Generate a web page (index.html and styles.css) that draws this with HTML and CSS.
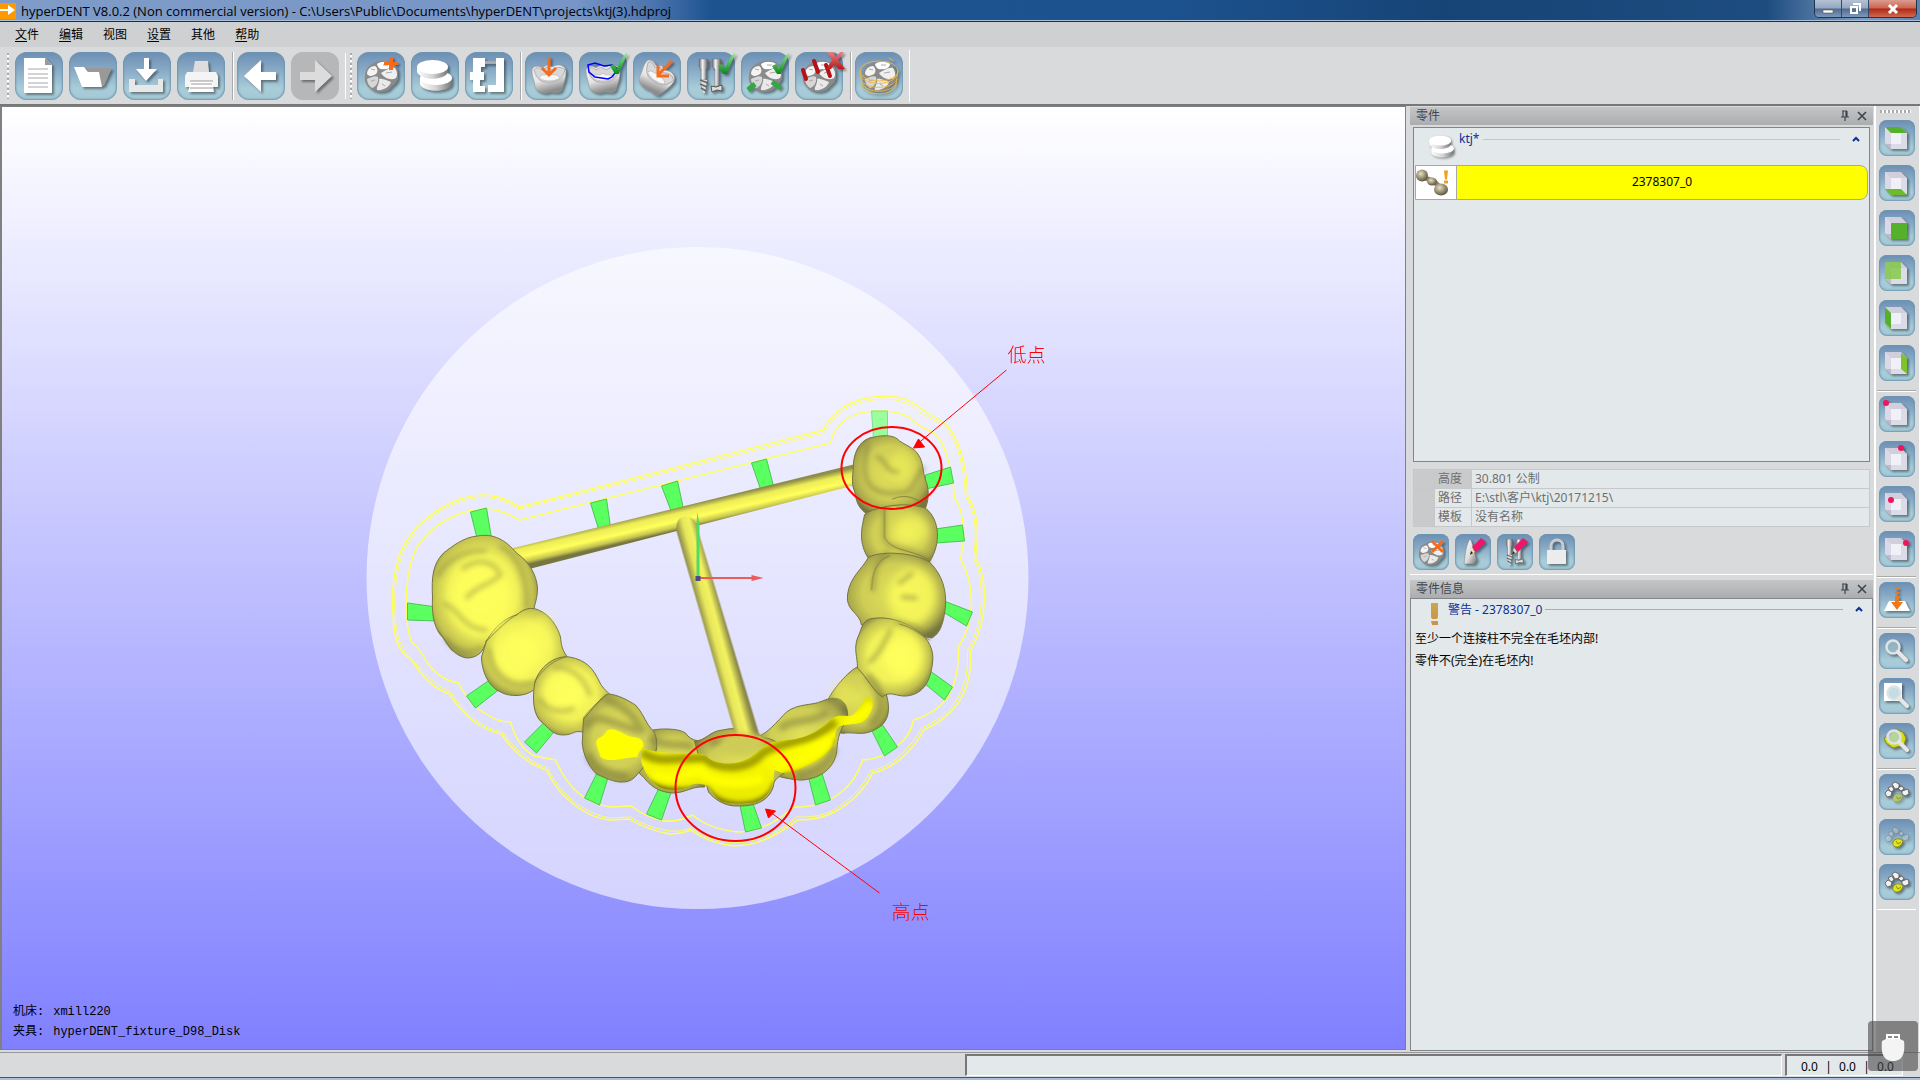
FILE: index.html
```html
<!DOCTYPE html>
<html lang="zh-CN">
<head>
<meta charset="UTF-8">
<meta name="viewport" content="width=device-width, initial-scale=1.0">
<title>hyperDENT V8.0.2</title>
<link rel="stylesheet" href="styles.css">
</head>
<body>

<!-- Shared icon parts -->
<svg class="defs" aria-hidden="true">
    <defs>
        <linearGradient id="enamel" x1="0" y1="0" x2="1" y2="1">
            <stop offset="0" stop-color="#fff"/><stop offset="0.55" stop-color="#dcdcdc"/><stop offset="1" stop-color="#6e6e6e"/>
        </linearGradient>
        <linearGradient id="enamelDown" x1="0" y1="0" x2="0.3" y2="1">
            <stop offset="0" stop-color="#f2f2f2"/><stop offset="0.6" stop-color="#e6e6e6"/><stop offset="1" stop-color="#8c8c8c"/>
        </linearGradient>
        <linearGradient id="steel" x1="0" y1="0" x2="1" y2="0">
            <stop offset="0" stop-color="#666"/><stop offset="0.4" stop-color="#f4f4f4"/><stop offset="1" stop-color="#555"/>
        </linearGradient>
        <linearGradient id="puck" x1="0" y1="0" x2="1" y2="0">
            <stop offset="0" stop-color="#fff"/><stop offset="0.5" stop-color="#d4d4d4"/><stop offset="1" stop-color="#777"/>
        </linearGradient>
        <linearGradient id="tick" x1="0" y1="0" x2="0" y2="1">
            <stop offset="0" stop-color="#8df08d"/><stop offset="1" stop-color="#0a8a1a"/>
        </linearGradient>
        <linearGradient id="cross" x1="0" y1="0" x2="0" y2="1">
            <stop offset="0" stop-color="#e88080"/><stop offset="1" stop-color="#c01818"/>
        </linearGradient>
        <linearGradient id="warn" x1="0" y1="0" x2="0" y2="1">
            <stop offset="0" stop-color="#c8a850"/><stop offset="1" stop-color="#cf8f45"/>
        </linearGradient>
    </defs>
    <symbol id="i-molar" viewBox="0 0 48 48">
        <path d="M8 24C8 17 12 13 17 11C22 8 29 8 33 10C39 12 42 17 41 24C42 30 36 33 33 37C28 41 19 41 14 37C9 33 7 29 8 24Z" fill="#8a8a8a"/>
        <path d="M10 22C10 17 14 14 18 14C21 16 21 20 19 22C16 24 12 25 10 22Z" fill="#f4f4f4"/>
        <path d="M20 12C24 9 31 9 35 12C35 15 31 18 27 17C23 18 21 16 20 12Z" fill="#fff"/>
        <path d="M24 21C28 19 33 15 38 16C40 19 41 23 39 26C34 29 27 26 24 21Z" fill="#efefef"/>
        <path d="M10 27C14 25 19 23 21 25C22 30 19 35 15 36C12 34 10 31 10 27Z" fill="#d6d6d6"/>
        <path d="M22 27C25 26 31 29 34 30C33 34 27 39 20 38C19 35 23 31 22 27Z" fill="#e9e9e9"/>
        <path d="M14 17L18 18M26 13L31 13M29 21L35 20M14 29L18 28M25 32L28 34" stroke="#aaa" fill="none"/>
    </symbol>
    <symbol id="i-crown" viewBox="0 0 48 48">
        <path d="M7 19C7 14 13 13 17 16L22 13L27 15C33 11 40 13 41 19C41 27 39 31 37 37C36 42 30 40 25 40C19 43 11 39 10 35C10 29 7 26 7 19Z" fill="url(#enamelDown)" stroke="#999" stroke-width=".6"/>
        <path d="M9 18C12 28 17 31 24 30C32 31 38 26 40 18C36 14 31 15 27 18L22 15L17 18C14 15 10 15 9 18Z" fill="#d8d8d8" stroke="#b0b0b0"/>
        <path d="M14 26C17 20 20 25 24 21C28 25 31 20 35 26C30 30 18 30 14 26Z" fill="#f6f6f6" stroke="#c4c4c4"/>
    </symbol>
    <symbol id="i-tick" viewBox="0 0 48 48">
        <path d="M31 14L35 12L38 17C41 9 44 4 49 0C46 7 42 15 40 22L36 22Z" fill="url(#tick)"/>
    </symbol>
    <symbol id="i-screws" viewBox="0 0 48 48">
        <path d="M12 7H21V15L19 17V28H14V17L12 15Z" fill="url(#steel)" stroke="#777" stroke-width=".5"/>
        <path d="M25 7H34V15L32 17V34H28V17L25 15Z" fill="url(#steel)" stroke="#777" stroke-width=".5"/>
        <path d="M24 34L29 35L35 33V39L30 38L25 40Z" fill="#ddd" stroke="#555"/>
        <path d="M14 28H20L18 41H16Z" fill="#ddd"/>
        <path d="M13 28L21 31M13 32L20 35M14 36L19 39" stroke="#666" stroke-width="1.5"/>
    </symbol>
    <symbol id="i-pucks" viewBox="0 0 48 48">
        <path d="M9 27V32C11 41 39 41 41 32V25Z" fill="url(#puck)"/>
        <ellipse cx="25" cy="26" rx="16" ry="7" fill="#fff"/>
        <path d="M6 15V20C9 29 34 29 37 20V15Z" fill="url(#puck)"/>
        <ellipse cx="21.500" cy="15" rx="15.500" ry="7" fill="#fff"/>
    </symbol>
    <symbol id="i-cube" viewBox="0 0 36 36">
        <path d="M6 7H22L28 13V29H12L6 23Z" fill="#d2cfdd"/>
        <path d="M6 7L12 13V29L6 23Z" fill="#ddd8e8"/>
        <path d="M6 23L12 29H28L22 24H6Z" fill="#c0b8cc"/>
        <path d="M12 13H28V29H12Z" fill="#dcdce8"/>
        <path d="M12 13H22V24H12Z" fill="#f0f0f7"/>
    </symbol>
    <symbol id="i-lens" viewBox="0 0 36 36">
        <circle cx="14" cy="14" r="6.500" fill="#a9cfd8" fill-opacity=".7" stroke="#dfe3e6" stroke-width="2.500"/>
        <path d="M19 19L27 27" stroke="#e6e6e6" stroke-width="4" stroke-linecap="round"/>
    </symbol>
    <symbol id="i-arch" viewBox="0 0 36 36">
        <g fill="#f1f1f1" stroke="#555" stroke-width=".8">
            <path d="M6 19L9 16L13 18L12 22L8 23Z"/><path d="M9 14L13 12L15 16L12 18Z"/>
            <path d="M13 10L16 8L20 10L20 14L16 15Z"/><path d="M19 14L23 12L25 15L22 17Z"/><path d="M23 17L29 15L30 20L26 22L23 20Z"/>
        </g>
    </symbol>
    <symbol id="i-yellow" viewBox="0 0 36 36">
        <path d="M14 23C16 19 21 19 24 22C23 26 20 28 18 28C15 28 13 26 14 23Z" fill="#e3e51c" stroke="#777a10" stroke-width=".8"/>
        <path d="M17 22L19 25L22 23" fill="none" stroke="#888b18"/>
    </symbol>
    <symbol id="i-pencil" viewBox="0 0 36 36">
        <path d="M15 21L17 14L20 18Z" fill="#f3dc9a"/>
        <path d="M15 21L16 17L18 19Z" fill="#222"/>
        <path d="M17 13L26 4L31 8L21 18Z" fill="#f0146a"/>
    </symbol>
    <symbol id="i-pin" viewBox="0 0 12 12">
        <path d="M3 1H8M4 1V7M7 1V7M8 1V7M2 7H10M6 7V11" fill="none" stroke="#3c4650" stroke-width="1.200"/>
    </symbol>
    <symbol id="i-close" viewBox="0 0 12 12">
        <path d="M2 2L10 10M10 2L2 10" stroke="#3c4650" stroke-width="1.600"/>
    </symbol>
</svg>

<header class="titlebar">
    <svg class="appIcon" viewBox="0 0 16 16"><path d="M0 0H16V16H0Z" fill="#f90"/><path d="M0 6H8V2L15 7L8 12V8H0Z" fill="#fff"/></svg>
    <h1>hyperDENT V8.0.2 (Non commercial version) - C:\Users\Public\Documents\hyperDENT\projects\ktj(3).hdproj</h1>
    <div class="windowButtons">
        <button aria-label="最小化"><svg viewBox="0 0 12 12"><path d="M1 7H11V10H1Z" fill="#fff" stroke="#555" stroke-width=".6"/></svg></button>
        <button aria-label="还原"><svg viewBox="0 0 12 12"><path d="M4 1H11V8M2 4H8V10H2Z" fill="none" stroke="#fff" stroke-width="2"/></svg></button>
        <button class="closeButton" aria-label="关闭"><svg viewBox="0 0 12 12"><path d="M2 2L10 10M10 2L2 10" stroke="#fff" stroke-width="3"/></svg></button>
    </div>
</header>

<nav class="menubar">
    <a href="#"><u>文</u>件</a>
    <a href="#"><u>编</u>辑</a>
    <a href="#">视图</a>
    <a href="#"><u>设</u>置</a>
    <a href="#">其他</a>
    <a href="#"><u>帮</u>助</a>
</nav>

<div class="toolbar">
    <span class="grip"></span>
    <button aria-label="新建"><svg viewBox="0 0 48 48"><path d="M9 6H30L37 13V41H9Z" fill="#fff"/><path d="M30 6V13H37Z" fill="#999"/><path d="M13 17H33M13 22H33M13 26H33M13 31H33M13 35H33" stroke="#a5a8ab"/></svg></button>
    <button aria-label="打开"><svg viewBox="0 0 48 48"><path d="M19 16H43L35 34H18Z" fill="#999"/><path d="M5 15H15L19 20H30L33 35H13Z" fill="#fff"/></svg></button>
    <button aria-label="保存"><svg viewBox="0 0 48 48"><path d="M6 27H12V33H35V27H40V40H6Z" fill="#e8e8e8"/><path d="M21 6H26V17H34L23 29L13 17H21Z" fill="#fff"/></svg></button>
    <button aria-label="打印"><svg viewBox="0 0 48 48"><path d="M18 9H31L32 20H16Z" fill="#ddd"/><path d="M10 20H39L41 24V35H8V24Z" fill="#f4f4f4"/><path d="M14 29H35L37 40H11Z" fill="#fff"/><path d="M13 29H36M14 32H35M13 36H36" stroke="#999"/></svg></button>
    <span class="separator"></span>
    <button aria-label="撤销"><svg viewBox="0 0 48 48"><path d="M7 24L24 8V20H39V28H24V40Z" fill="#fff"/></svg></button>
    <button aria-label="重做" disabled><svg viewBox="0 0 48 48"><path d="M41 24L24 8V20H9V28H24V40Z" fill="#dcdcdc"/></svg></button>
    <span class="grip grip2"></span>
    <button aria-label="添加零件"><svg viewBox="0 0 48 48"><use href="#i-molar"/><path d="M32 5H36V10H41V13H36V18H32V13H27V10H32Z" fill="#f76b1c"/></svg></button>
    <button aria-label="毛坯"><svg viewBox="0 0 48 48"><use href="#i-pucks"/></svg></button>
    <button aria-label="夹具"><svg viewBox="0 0 48 48"><path d="M8 6H20V15H16V20H19V28H15V34H20V40H8V28H5V20H8Z" fill="#fff"/><path d="M20 9H31V12H20Z" fill="#aaa"/><path d="M31 6H39V40H23V33H31Z" fill="#fff"/></svg></button>
    <span class="separator"></span>
    <button aria-label="放置"><svg viewBox="0 0 48 48"><use href="#i-crown"/><path d="M24 5V22M17 16L24 23L31 16" fill="none" stroke="#f76b1c" stroke-width="3"/></svg></button>
    <button aria-label="边缘线"><svg viewBox="0 0 48 48"><use href="#i-crown"/><path d="M9 13L16 11L25 14L33 13L39 17L33 25L29 27L16 25L10 20Z" fill="none" stroke="#00f" stroke-width="1.500"/><use href="#i-tick"/></svg></button>
    <button aria-label="方向"><svg viewBox="0 0 48 48"><g transform="rotate(35 24 24)"><use href="#i-crown"/></g><path d="M39 9L25 23M25 13V24H36" fill="none" stroke="#f76b1c" stroke-width="3"/></svg></button>
    <button aria-label="螺钉"><svg viewBox="0 0 48 48"><use href="#i-screws"/><use href="#i-tick"/></svg></button>
    <button aria-label="连接柱"><svg viewBox="0 0 48 48"><use href="#i-molar"/><path d="M7 38L14 32M31 30L40 36" stroke="#31a843" stroke-width="5"/><use href="#i-tick"/></svg></button>
    <button aria-label="删除连接柱"><svg viewBox="0 0 48 48"><use href="#i-molar"/><path d="M8 18L11 27M19 9L23 20M31 13L35 24" stroke="#b51218" stroke-width="4" stroke-linecap="round"/><path d="M32 0H38L41 5L45 0H49L43 8L50 17H43L40 12L36 17H31L37 8Z" fill="url(#cross)"/></svg></button>
    <span class="separator"></span>
    <button aria-label="计算刀路"><svg viewBox="0 0 48 48"><use href="#i-molar"/><g fill="none" stroke="#f0b840" stroke-width=".9"><ellipse cx="24" cy="19" rx="19" ry="10"/><path d="M5 19L7 34C11 44 36 45 41 33L43 18M6 24C10 34 38 34 42 23M6 28C11 38 37 38 42 27M7 31C12 42 36 42 41 31M34 6L39 9"/></g></svg></button>
    <span class="toolbarEnd"></span>
</div>

<main class="workspace">
    <section class="viewport">
        <svg class="scene" viewBox="3 107 1402 942" role="img" aria-label="牙桥">
            <defs>
                <radialGradient id="tooth" cx=".48" cy=".48" r=".58">
                    <stop offset="0" stop-color="#fdfd5c"/><stop offset=".55" stop-color="#f0f059"/><stop offset=".82" stop-color="#c3c250"/><stop offset="1" stop-color="#7e7d42"/>
                </radialGradient>
                <radialGradient id="toothDim" cx=".5" cy=".48" r=".58">
                    <stop offset="0" stop-color="#e2e158"/><stop offset=".6" stop-color="#cfce55"/><stop offset=".85" stop-color="#a9a84c"/><stop offset="1" stop-color="#77763f"/>
                </radialGradient>
                <linearGradient id="barA" gradientUnits="userSpaceOnUse" x1="715" y1="499" x2="720" y2="521">
                    <stop offset="0" stop-color="#8f8e48"/><stop offset=".25" stop-color="#ecec56"/><stop offset=".6" stop-color="#ffff5c"/><stop offset=".85" stop-color="#c6c550"/><stop offset="1" stop-color="#777640"/>
                </linearGradient>
                <linearGradient id="barB" gradientUnits="userSpaceOnUse" x1="706" y1="636" x2="728" y2="630">
                    <stop offset="0" stop-color="#8b8a48"/><stop offset=".35" stop-color="#e8e75c"/><stop offset=".65" stop-color="#f3f260"/><stop offset="1" stop-color="#8b8a48"/>
                </linearGradient>
                <linearGradient id="vivid" x1="0" y1="0" x2="0" y2="1">
                    <stop offset="0" stop-color="#dddc00"/><stop offset=".45" stop-color="#ffff00"/><stop offset="1" stop-color="#e6e500"/>
                </linearGradient>
                <filter id="soft" x="-20%" y="-20%" width="140%" height="140%"><feGaussianBlur stdDeviation="2.500"/></filter>
                <filter id="softer" x="-30%" y="-30%" width="160%" height="160%"><feGaussianBlur stdDeviation="5"/></filter>
                <clipPath id="vividClip"><path d="M641 748C650 750 660 753 670 753C685 754 700 752 707 756C712 762 722 764 733 763C750 762 758 750 767 745C778 739 790 741 800 738C812 735 820 730 832 719C840 713 848 718 853 715C860 710 862 702 867 698C871 694 874 698 873 707C870 716 866 722 860 723C850 725 842 724 838 728C834 733 837 738 835 743C830 753 822 759 813 763C803 768 794 774 783 773L775 770C774 776 775 782 772 787C768 797 760 803 750 803C740 804 732 804 723 802C715 798 714 793 710 787C702 783 695 783 690 786C685 789 680 790 673 790C664 790 659 787 653 782C648 777 645 770 642 763Z"/></clipPath>
            </defs>

            <circle class="disc" cx="698" cy="578" r="331"/>

            <!-- milling boundary lines -->
            <g class="boundary">
                <path d="M520 507Q502 495 484 495Q462 495 440 509Q410 528 400 555Q392 580 393 605Q394 630 397 640Q400 652 412 660Q430 688 450 694Q462 712 475 722Q490 732 502 734Q515 754 535 765L547 770Q556 790 575 805Q592 818 610 820L630 819Q645 829 670 834Q682 834 691 830Q708 843 735 846Q760 845 780 832Q790 827 798 820Q820 820 835 812Q862 797 873 773Q885 771 900 760Q918 744 924 730Q945 721 958 704Q973 682 971 651Q984 628 985 600Q985 572 976 558Q979 535 977 520Q974 504 968 496Q968 470 959 445Q952 427 940 420Q928 413 922 409Q908 396 884 396Q860 397 844 407Q829 417 824 430Z"/>
                <path class="thin" d="M520 509Q502 498 484 497Q462 498 441 511Q412 530 402 556Q395 580 395 605Q396 630 400 641Q404 652 414 661Q432 684 451 692Q463 710 476 720Q490 730 503 732Q517 752 536 763L548 768Q558 788 576 803Q593 815 610 818L631 817Q646 827 670 831Q682 832 691 828Q708 841 735 843Q760 842 779 830Q790 825 797 817Q820 818 834 810Q860 795 871 771Q884 769 898 758Q915 742 922 728Q943 719 956 702Q970 681 968 651Q981 628 982 600Q982 572 974 558Q977 535 975 521Q972 505 966 497Q965 470 957 446Q950 429 939 423Q927 416 920 412Q907 399 884 399Q861 400 846 409Q831 419 825 433Z"/>
                <path d="M520 520Q500 508 484 509Q465 510 450 518Q425 532 415 552Q406 575 407 605Q407 630 412 642Q420 648 428 663Q440 680 459 683Q470 705 487 714Q497 722 511 722Q518 747 535 756L556 760Q566 783 580 794Q596 806 612 807L632 806Q645 817 665 821Q680 822 693 815Q711 830 740 832Q770 830 794 807Q822 808 842 792Q857 780 863 760Q884 759 900 744Q911 735 914 720Q935 714 947 699Q960 678 959 647Q972 627 972 602Q971 575 961 559Q966 540 963 520Q961 505 955 498Q953 470 946 452Q941 435 928 430Q918 425 911 418Q895 409 875 411Q855 412 844 421Q833 431 831 443Z"/>
            </g>

            <!-- connector pins -->
            <g class="pins">
                <path d="M471 512L487 508L492 538L478 540Z"/><path d="M408 603L437 607V621L408 620Z"/>
                <path d="M591 503L607 499L611 527L599 529Z"/><path d="M662 486L678 481L684 509L672 512Z"/>
                <path d="M752 463L767 459L774 486L761 489Z"/><path class="pale" d="M872 411H888V438H874Z"/>
                <path d="M926 475L951 467L954 483L926 489Z"/><path d="M936 529L963 525L965 541L936 543Z"/>
                <path d="M942 600L973 612L967 626L942 611Z"/><path d="M932 672L953 687L945 700L922 681Z"/>
                <path d="M871 728L881 722L898 747L885 756Z"/><path d="M809 777L822 772L831 800L816 805Z"/>
                <path d="M740 803L753 802L762 828L746 832Z"/><path d="M659 789L672 791L662 820L647 814Z"/>
                <path d="M599 770L609 776L600 805L585 798Z"/><path d="M545 722L556 730L537 753L525 742Z"/>
                <path d="M490 680L499 690L476 708L467 696Z"/>
            </g>

            <path d="M510 549L860 463V484L522 571Z" fill="url(#barA)"/>

            <!-- teeth, right side -->
            <g class="tooth" fill="url(#toothDim)">
                <path d="M865 515C875 500 915 498 927 509C940 520 942 543 930 562C910 575 880 570 868 557C858 540 863 525 865 515Z"/>
                <path d="M875 437C883 435 893 435 898 439C902 444 915 447 919 455C924 462 923 472 926 480C931 492 928 503 926 508C905 502 885 505 866 513C856 505 857 498 855 491C851 483 854 473 854 463C855 450 862 438 875 437Z"/>
                <path d="M827 703C832 690 850 670 858 667C872 662 883 680 887 695C892 713 887 722 880 727C865 737 858 732 846 733C835 735 830 725 827 703Z"/>
                <path d="M757 737C768 734 777 722 787 712C799 703 812 706 823 701C838 694 850 700 848 720C838 732 838 743 837 753C834 768 822 778 803 780C792 780 781 777 770 774Z"/>
                <path d="M862 625C860 612 846 611 848 595C850 577 863 569 869 557C885 550 915 553 930 562C943 575 947 590 946 606C944 625 940 634 932 638Z"/>
            </g>
            <path class="tooth" fill="url(#tooth)" d="M858 668C858 656 854 650 858 638C862 630 862 622 870 619C888 615 905 622 917 630C929 638 935 650 933 663C931 680 925 694 907 696C898 697 890 690 883 697C875 693 868 678 858 668Z"/>
            <g filter="url(#softer)" class="lit">
                <ellipse cx="903" cy="467" rx="12" ry="16" opacity=".5"/><ellipse cx="912" cy="530" rx="16" ry="14" opacity=".8"/>
                <ellipse cx="913" cy="597" rx="24" ry="29"/><ellipse cx="905" cy="658" rx="18" ry="22"/><ellipse cx="842" cy="694" rx="10" ry="13" opacity=".4"/>
            </g>
            <g class="groove" filter="url(#soft)">
                <path d="M868 446C866 462 862 473 870 485C880 495 890 493 903 493C915 492 915 477 924 468M878 457C887 459 885 472 898 472"/>
                <path d="M888 552C875 563 874 577 874 590M897 622C915 624 923 633 929 637M900 583L912 574M903 597L916 598"/>
                <path d="M884 511C887 530 880 540 890 545C906 552 915 549 929 561M870 662C879 655 885 643 891 630"/>
            </g>
            <g class="crease">
                <path d="M885 510V537C891 551 910 549 928 559M872 590C873 570 878 560 890 556M893 499C907 493 917 499 922 503M900 624C915 628 922 636 930 640"/>
            </g>

            <!-- teeth, left side -->
            <g class="tooth" fill="url(#tooth)">
                <path d="M478 536C494 533 506 540 517 553C530 562 537 575 538 588C538 603 532 608 536 613C524 626 500 632 487 640C484 653 477 658 467 658C456 656 449 647 444 638C435 630 432 616 433 597C432 578 433 564 444 553C452 547 464 537 478 536Z"/>
                <path d="M487 641C495 627 505 618 517 615C525 608 532 607 539 610C551 615 558 627 561 637C562 649 564 651 569 659C560 670 545 678 534 690C525 697 510 697 501 692C489 687 482 671 482 657Z"/>
                <path d="M535 684C539 667 555 655 570 657C587 660 594 669 600 682C605 692 613 694 613 700C607 713 586 715 583 732C573 730 575 735 563 735C552 735 548 726 543 723C533 715 533 698 535 684Z"/>
            </g>
            <g class="tooth" fill="url(#toothDim)">
                <path d="M650 731C658 728 679 728 686 733C692 742 700 741 712 742L705 787C692 786 686 793 673 793C658 792 650 785 644 777C634 771 634 752 650 731Z"/>
                <path d="M695 741C706 741 710 731 723 730C740 726 755 731 765 738C780 739 790 752 785 773C777 778 774 781 774 786C769 803 753 806 740 806C724 807 714 798 709 792Z"/>
                <path d="M584 719C593 709 601 697 609 694C619 695 628 700 636 705C645 715 646 724 654 731C661 745 656 760 647 764C636 775 635 783 620 782C611 781 602 776 597 774C588 766 581 748 583 738Z"/>
            </g>
            <g filter="url(#softer)" class="lit">
                <ellipse cx="482" cy="598" rx="31" ry="38"/><ellipse cx="516" cy="656" rx="21" ry="24"/><ellipse cx="566" cy="690" rx="21" ry="19"/>
                <path d="M524 628L548 612L556 640L540 668ZM570 668L590 690L580 708L556 690Z" opacity=".7"/>
            </g>
            <g class="shade" filter="url(#soft)">
                <path d="M502 547C517 555 528 575 527 607M485 551C466 550 447 560 439 575M464 568C480 557 495 562 501 575C490 585 475 587 468 597M446 604C460 610 463 628 486 630"/>
                <path d="M447 640C455 650 467 655 482 648M490 650C492 676 512 689 534 683M541 700C549 713 563 712 573 709M556 668C570 666 584 677 590 694"/>
            </g>
            <g class="shadeDark" filter="url(#soft)">
                <path d="M608 700C622 706 634 713 642 730M588 725C598 711 610 724 637 730M590 757C596 771 612 775 625 776M654 740C669 748 683 743 690 746M714 743C730 741 745 745 763 740"/>
                <path d="M783 727C795 718 810 724 825 714M870 678C882 690 885 710 873 722M800 775C817 771 829 763 834 750"/>
            </g>
            <g class="crease"><path d="M487 641C500 628 508 620 518 614M535 682C545 666 556 660 566 657M584 718C592 706 600 703 607 694M439 631C444 638 448 645 453 651"/></g>

            <path d="M677 531C676 519 682 514 690 517C696 519 698 526 699 532L760 735L748 748L736 736Z" fill="url(#barB)"/>
            <path d="M725 738C740 731 755 732 768 740C762 749 750 755 738 756L715 751Z" fill="#cecc56" filter="url(#soft)"/>

            <!-- area sticking out of the blank -->
            <path d="M597 745C595 737 603 738 605 734C610 725 618 731 627 735C634 739 644 735 644 746C642 750 639 751 638 757C625 757 610 764 601 757Z" fill="#ff0"/>
            <g clip-path="url(#vividClip)">
                <path d="M590 690H880V810H590Z" fill="url(#vivid)"/>
                <g filter="url(#soft)">
                    <path d="M642 752C660 765 675 757 706 758C716 770 748 771 763 753C782 740 810 745 836 721" class="darkBand"/>
                    <path d="M643 778C668 799 690 788 708 790C717 809 768 814 777 783M784 777C813 774 837 757 839 739" class="darkLine"/>
                    <path d="M653 774C675 782 681 774 700 771C713 785 745 785 763 778M772 766C800 763 817 753 829 741M845 721C858 720 866 713 871 704" class="brightBand"/>
                </g>
            </g>

            <!-- axes -->
            <path d="M697 525L698 512L700 525V577H697Z" fill="#4fdc62"/>
            <path d="M700 577H752V575L764 578L752 581V579H700Z" fill="#ef5a5a"/>
            <path d="M696 576H701V581H696Z" fill="#4b4c84"/>

            <!-- annotations -->
            <g class="marks">
                <ellipse cx="892" cy="468" rx="50" ry="41"/>
                <ellipse cx="736" cy="788" rx="60" ry="53"/>
                <path class="thin" d="M1007 370L919 443M880 893L772 813"/>
                <path class="head" d="M914 448L919 439L925 447ZM766 809L776 811L769 818Z"/>
            </g>
            <text class="note" x="1008" y="362">低点</text>
            <text class="note" x="892" y="919">高点</text>
        </svg>
        <div class="machineInfo">
            <p>机床: <span>xmill220</span></p>
            <p>夹具: <span>hyperDENT_fixture_D98_Disk</span></p>
        </div>
    </section>

    <aside class="panels">
        <section class="parts">
            <div class="panelHead"><h2>零件</h2><button aria-label="固定"><svg><use href="#i-pin"/></svg></button><button aria-label="关闭"><svg><use href="#i-close"/></svg></button></div>
            <div class="partList">
                <div class="groupHead">
                    <svg class="groupIcon" viewBox="0 0 48 48"><use href="#i-pucks"/></svg>
                    <span>ktj*</span><i></i>
                    <button aria-label="收起"><svg viewBox="0 0 8 6"><path d="M1 5L4 2L7 5" fill="none" stroke="#0a2f93" stroke-width="2"/></svg></button>
                </div>
                <button class="partItem">
                    <svg viewBox="0 0 40 32"><defs><radialGradient id="bone" cx=".4" cy=".35" r=".65"><stop offset="0" stop-color="#e8e0c0"/><stop offset="1" stop-color="#5e5640"/></radialGradient></defs>
                        <path d="M8 11L18 15L27 24" stroke="#8b8262" stroke-width="5" fill="none"/>
                        <ellipse cx="6" cy="9" rx="6" ry="6" fill="url(#bone)"/><ellipse cx="16" cy="15" rx="5" ry="4" fill="url(#bone)"/><ellipse cx="25" cy="23" rx="7" ry="6" fill="url(#bone)"/>
                        <path d="M28 4H32L31 13H29ZM28 14H32V17H28Z" fill="#f0a020"/></svg>
                    <span>2378307_0</span>
                </button>
            </div>
            <table class="partInfo">
                <tr class="active"><td class="lead"></td><th scope="row">高度</th><td>30.801 公制</td></tr>
                <tr><td class="lead"></td><th scope="row">路径</th><td>E:\stl\客户\ktj\20171215\</td></tr>
                <tr><td class="lead"></td><th scope="row">模板</th><td>没有名称</td></tr>
            </table>
            <div class="partTools">
                <button aria-label="删除零件"><svg viewBox="0 0 36 36"><use href="#i-molar" y="1" width="36" height="36"/><path d="M19 7L30 18M30 7L19 18" stroke="#f76b1c" stroke-width="3"/></svg></button>
                <button aria-label="编辑零件"><svg viewBox="0 0 36 36"><path d="M15 5C18 8 18 17 22 26L19 30L9 30C10 22 11 10 15 5Z" fill="url(#enamel)" stroke="#777" stroke-width=".5"/><use href="#i-pencil"/></svg></button>
                <button aria-label="编辑螺钉"><svg viewBox="0 0 36 36"><use href="#i-screws" width="36" height="36"/><use href="#i-pencil"/></svg></button>
                <button aria-label="锁定"><svg viewBox="0 0 36 36"><path d="M12 16V12C12 4 24 4 24 12V16" fill="none" stroke="#c9cdd0" stroke-width="3"/><path d="M8 16H27V30H8Z" fill="#ececec"/></svg></button>
            </div>
        </section>
        <section class="messages">
            <div class="panelHead"><h2>零件信息</h2><button aria-label="固定"><svg><use href="#i-pin"/></svg></button><button aria-label="关闭"><svg><use href="#i-close"/></svg></button></div>
            <div class="messageList">
                <div class="warnHead">
                    <svg class="warnIcon" viewBox="0 0 8 24"><path d="M0 1H7V15L6 17H1L0 15ZM0 19H7V23H1Z" fill="url(#warn)"/></svg>
                    <span>警告 - 2378307_0</span><i></i>
                    <button aria-label="收起"><svg viewBox="0 0 8 6"><path d="M1 5L4 2L7 5" fill="none" stroke="#0a2f93" stroke-width="2"/></svg></button>
                </div>
                <p>至少一个连接柱不完全在毛坯内部!</p>
                <p>零件不(完全)在毛坯内!</p>
            </div>
        </section>
    </aside>

    <div class="viewTools">
        <span class="gripTop"></span>
        <button aria-label="俯视"><svg viewBox="0 0 36 36"><use href="#i-cube"/><path d="M6 7H22L28 13H12Z" fill="#55b02c"/></svg></button>
        <button aria-label="仰视"><svg viewBox="0 0 36 36"><use href="#i-cube"/><path d="M6 24H22L28 30H12Z" fill="#6cbb2c"/></svg></button>
        <button aria-label="前视"><svg viewBox="0 0 36 36"><use href="#i-cube"/><path d="M12 13H28V29H12Z" fill="#55b02c"/></svg></button>
        <button aria-label="后视"><svg viewBox="0 0 36 36"><use href="#i-cube"/><path d="M6 7H22V24H6Z" fill="#7cc43c" fill-opacity=".8"/></svg></button>
        <button aria-label="左视"><svg viewBox="0 0 36 36"><use href="#i-cube"/><path d="M6 7L12 13V29L6 23Z" fill="#55b02c"/></svg></button>
        <button aria-label="右视"><svg viewBox="0 0 36 36"><use href="#i-cube"/><path d="M22 8L28 13V29L22 24Z" fill="#7cc42c"/></svg></button>
        <span class="rule"></span>
        <button aria-label="视角 1"><svg viewBox="0 0 36 36"><use href="#i-cube"/><circle cx="7" cy="7" r="3" fill="#f0145a"/></svg></button>
        <button aria-label="视角 2"><svg viewBox="0 0 36 36"><use href="#i-cube"/><circle cx="22" cy="7" r="3" fill="#f0145a"/></svg></button>
        <button aria-label="视角 3"><svg viewBox="0 0 36 36"><use href="#i-cube"/><circle cx="12" cy="14" r="3" fill="#f0145a"/></svg></button>
        <button aria-label="视角 4"><svg viewBox="0 0 36 36"><use href="#i-cube"/><circle cx="27" cy="12" r="3" fill="#f0145a"/></svg></button>
        <span class="rule"></span>
        <button aria-label="投影"><svg viewBox="0 0 36 36"><path d="M10 19H26L31 29H5Z" fill="#fff"/><path d="M16 6H20V8H16ZM16 10H20V12H16ZM16 14H20V20H24L18 28L12 20H16Z" fill="#f07818"/></svg></button>
        <span class="rule"></span>
        <button aria-label="缩放"><svg viewBox="0 0 36 36"><use href="#i-lens"/></svg></button>
        <button aria-label="窗口缩放"><svg viewBox="0 0 36 36"><path d="M5 5H23V23H5Z" fill="#fff"/><use href="#i-lens" x="1" y="1"/></svg></button>
        <button aria-label="适合零件"><svg viewBox="0 0 36 36"><path d="M5 15L11 12L15 6L24 9L27 15L25 22L14 25L7 20Z" fill="#d8dc14" stroke="#8a8c18"/><use href="#i-lens" x="1"/></svg></button>
        <span class="rule"></span>
        <button aria-label="显示全部"><svg viewBox="0 0 36 36"><use href="#i-arch"/><use href="#i-yellow" opacity=".5"/></svg></button>
        <button aria-label="仅显示选中"><svg viewBox="0 0 36 36"><use href="#i-arch" opacity=".3"/><use href="#i-yellow"/></svg></button>
        <button aria-label="显示两者"><svg viewBox="0 0 36 36"><use href="#i-arch"/><use href="#i-yellow"/></svg></button>
        <span class="toolsEnd"></span>
    </div>
</main>

<footer class="statusbar">
    <div class="statusFree"></div>
    <div class="statusField"></div>
    <div class="coords"><span>0.0</span><span>|</span><span>0.0</span><span>|</span><span>0.0</span></div>
</footer>

<div class="usbBadge">
    <svg viewBox="0 0 50 50"><path d="M18 13H32V19H18Z" fill="#fff"/><path d="M20 15H24V17H20ZM26 15H30V17H26Z" fill="#888"/><path d="M18 18H32L36 20C37 30 36 40 25 40C14 40 13 30 14 20Z" fill="#f4f4f4"/></svg>
</div>

</body>
</html>
```
FILE: styles.css
```css
* {
    box-sizing: border-box;
}

body {
    margin: 0;
    height: 100vh;
    display: flex;
    flex-direction: column;
    overflow: hidden;
    background-color: #d9dadc;
    border-bottom: 2px solid #a9bfd8;
    font-family: "Noto Sans", "Noto Sans CJK SC", sans-serif;
    font-size: 12px;
    color: #000;
}

h1, h2, p {
    margin: 0;
    font-weight: normal;
}

button {
    margin: 0;
    padding: 0;
    border: none;
    background: none;
    font: inherit;
    color: inherit;
}

svg {
    display: block;
}

.defs {
    position: absolute;
    width: 0;
    height: 0;
}

/* Title bar */
.titlebar {
    display: flex;
    align-items: center;
    gap: 5px;
    height: 22px;
    flex-shrink: 0;
    border-bottom: 1px solid #1c2c48;
    box-shadow: inset 0 -1px #a9c0dc;
    background: linear-gradient(90deg, #7f9cc8 0, #7795c6 30%, #4c74ae 34%, #1d5490 37%, #1c538f 60%, #174477 75%, #1d4c80 92%, #7b9bc2 97%, #5c82b0 100%);
}

.appIcon {
    width: 16px;
    height: 16px;
}

.titlebar h1 {
    flex: 1;
    font-family: "Open Sans", sans-serif;
    font-size: 13px;
    line-height: 20px;
    white-space: nowrap;
}

.windowButtons {
    display: flex;
    align-self: flex-start;
    margin-right: 3px;
    border: 1px solid #1e3450;
    border-top: none;
    border-radius: 0 0 5px 5px;
    overflow: hidden;
}

.windowButtons button {
    width: 27px;
    height: 17px;
    border-right: 1px solid #33496a;
    background: linear-gradient(#b4c2d4 0, #93a7c0 48%, #506b90 52%, #7d98ba 100%);
}

.windowButtons .closeButton {
    width: 47px;
    border-right: none;
    background: linear-gradient(#dc9c90 0, #cb6350 48%, #b02812 52%, #d06a50 100%);
}

.windowButtons svg {
    width: 12px;
    height: 12px;
    margin: 0 auto;
}

/* Menu */
.menubar {
    display: flex;
    gap: 20px;
    height: 25px;
    flex-shrink: 0;
    padding-left: 15px;
    background-color: #cfd0d2;
}

.menubar a {
    color: #000;
    text-decoration: none;
    line-height: 25px;
}

.menubar u {
    text-underline-offset: 2px;
}

/* Main toolbar */
.toolbar {
    display: flex;
    align-items: center;
    height: 59px;
    flex-shrink: 0;
    padding-left: 3px;
    border-bottom: 2px solid #777;
}

.toolbar button, .viewTools button, .partTools button {
    flex-shrink: 0;
    background: linear-gradient(#6c8eb4 0, #86a8c4 35%, #a8ccd8 75%, #a4c9d6 100%);
    box-shadow: inset 0 0 2px 1px #6d95b0;
}

.toolbar button {
    width: 48px;
    height: 48px;
    margin-right: 6px;
    border-radius: 12px;
}

.toolbar button:disabled {
    background: #b6b7b8;
    box-shadow: none;
}

.toolbar button svg, .viewTools button svg, .partTools button svg {
    width: 100%;
    height: 100%;
    overflow: visible;
    filter: drop-shadow(2px 2px 1px rgba(0, 0, 0, 0.4));
}

.grip {
    width: 12px;
    height: 46px;
    background: repeating-linear-gradient(#aaa 0, #aaa 2px, #fff 2px, #fff 4px, #d9dadc 4px, #d9dadc 5px) 4px 0 / 2px 46px no-repeat;
}

.grip2 {
    border-left: 1px solid #fff;
}

.separator {
    width: 2px;
    height: 48px;
    margin: 0 3px 0 1px;
    background: linear-gradient(90deg, #aaa 50%, #fff 50%);
}

.toolbarEnd {
    width: 1px;
    height: 52px;
    background-color: #fff;
}

/* Workspace */
.workspace {
    flex: 1;
    min-height: 0;
    display: flex;
    border-bottom: 1px solid #999;
}

.viewport {
    position: relative;
    flex: 1;
    min-width: 0;
    margin-bottom: 2px;
    border: 1px solid #808080;
    border-left-width: 2px;
    background: linear-gradient(#fff 0%, #8080ff 100%);
}

.scene {
    width: 100%;
    height: 100%;
}

.disc {
    fill: #fff;
    fill-opacity: 0.6;
}

.boundary {
    fill: none;
    stroke: #ffff5e;
    stroke-width: 1.5;
}

.boundary .thin {
    stroke-width: 1;
}

.pins {
    fill: #5aff60;
    stroke: #4cc456;
    stroke-width: 1;
}

.pins .pale {
    fill: #98ff9c;
    stroke: #84dc94;
}

.tooth {
    stroke: #77763f;
    stroke-width: 1;
}

.lit {
    fill: #ffff5c;
    opacity: 0.75;
}

.groove, .shade, .shadeDark, .crease {
    fill: none;
    stroke: #77763c;
    stroke-width: 4;
    opacity: 0.5;
    stroke-linecap: round;
}

.shade {
    opacity: 0.35;
    stroke-width: 5;
}

.shadeDark {
    opacity: 0.45;
    stroke-width: 8;
}

.crease {
    stroke-width: 1;
    opacity: 0.8;
}

.darkBand {
    fill: none;
    stroke: #a3a100;
    stroke-width: 9;
}

.darkLine {
    fill: none;
    stroke: #6b6900;
    stroke-width: 6;
}

.brightBand {
    fill: none;
    stroke: #ffff00;
    stroke-width: 9;
}

.marks {
    fill: none;
    stroke: #ff0000;
    stroke-width: 2;
}

.marks .thin {
    stroke-width: 1;
}

.marks .head {
    fill: #ff0000;
    stroke-width: 1;
}

.note {
    fill: #ff0000;
    font-family: "Noto Sans CJK SC", sans-serif;
    font-size: 19px;
    font-weight: 300;
}

.machineInfo {
    position: absolute;
    left: 11px;
    bottom: 7px;
    font-family: "Liberation Mono", "Noto Sans CJK SC", monospace;
    line-height: 20px;
}

.machineInfo p {
    display: flex;
    gap: 9px;
}

/* Right panels */
.panels {
    width: 470px;
    display: flex;
    flex-direction: column;
    padding: 1px 1px 1px 4px;
    border-right: 2px solid #fff;
}

.panelHead {
    display: flex;
    align-items: center;
    gap: 5px;
    height: 18px;
    padding: 0 5px 0 6px;
    background: linear-gradient(#c4c5c7, #acadaf);
    color: #3c4650;
}

.panelHead h2 {
    flex: 1;
    font-size: 12px;
    line-height: 18px;
}

.panelHead svg {
    width: 12px;
    height: 12px;
}

.partList {
    height: 335px;
    margin: 2px 3px 7px;
    padding: 1px;
    border: 1px solid #80868c;
    background-color: #e3e9eb;
}

.groupHead, .warnHead {
    display: flex;
    align-items: flex-start;
    color: #0a2f93;
}

.groupHead {
    height: 36px;
    padding: 0 8px 0 10px;
    line-height: 20px;
}

.groupIcon {
    width: 34px;
    height: 36px;
    filter: drop-shadow(1px 1px 1px rgba(0, 0, 0, 0.4));
}

.groupHead i, .warnHead i {
    flex: 1;
    height: 1px;
    margin: 10px 12px 0 4px;
    background-color: #b7c8da;
}

.groupHead button, .warnHead button {
    padding-top: 7px;
}

.groupHead button svg, .warnHead button svg {
    width: 8px;
    height: 6px;
}

.partItem {
    display: flex;
    width: 100%;
    height: 35px;
    border: 1px solid #a8a8a8;
    border-radius: 0 8px 8px 0;
    background-color: #ffff00;
    overflow: hidden;
    line-height: 32px;
}

.partItem svg {
    width: 41px;
    height: 33px;
    border-right: 1px solid #a8a8a8;
    background-color: #fff;
}

.partItem span {
    flex: 1;
}

.partInfo {
    width: calc(100% - 6px);
    margin: 0 3px;
    border: 1px solid #999b9e;
    border-collapse: collapse;
    background-color: #e3e9eb;
    color: #6f6f6f;
}

.partInfo td, .partInfo th {
    height: 19px;
    padding: 0 3px;
    border: 1px solid #c6c8ca;
    font-weight: normal;
    text-align: left;
    line-height: 18px;
}

.partInfo th {
    width: 37px;
}

.partInfo .lead {
    width: 21px;
    background-color: #c9cacc;
}

.partInfo .active th {
    background-color: #c9cacc;
}

.partTools {
    display: flex;
    gap: 6px;
    height: 45px;
    margin: 3px 0 5px;
    padding: 4px 3px 0;
    border-bottom: 1px solid #fff;
}

.partTools button, .viewTools button {
    width: 36px;
    height: 36px;
    border-radius: 8px;
}

.messages {
    flex: 1;
    display: flex;
    flex-direction: column;
}

.messageList {
    flex: 1;
    padding-left: 4px;
    border: 1px solid #80868c;
    background-color: #e3e9eb;
}

.messageList p {
    line-height: 22px;
}

.warnHead {
    height: 29px;
    padding: 0 9px 0 16px;
    line-height: 22px;
}

.warnIcon {
    width: 8px;
    height: 24px;
    margin: 3px 9px 0 0;
}

.warnHead i {
    margin-left: 3px;
    background-color: #98aed8;
}

/* View buttons on the right edge */
.viewTools {
    width: 44px;
    padding: 0 3px 0 1px;
    border-right: 1px solid #fff;
}

.viewTools button {
    display: block;
    margin: 0 0 9px 2px;
}

.gripTop {
    display: block;
    height: 3px;
    margin: 4px 5px 7px 3px;
    background: repeating-linear-gradient(90deg, #aaa 0, #aaa 2px, #fff 2px, #fff 4px);
}

.rule {
    display: block;
    height: 2px;
    margin-bottom: 4px;
    background: linear-gradient(#aaa 50%, #fff 50%);
}

.toolsEnd {
    display: block;
    height: 1px;
    background-color: #fff;
}

/* Status bar */
.statusbar {
    display: flex;
    gap: 3px;
    height: 25px;
    flex-shrink: 0;
    padding: 1px 17px 1px 0;
    border-bottom: 1px solid #44546a;
    line-height: 21px;
}

.statusFree {
    flex: 966;
}

.statusField {
    flex: 817;
}

.statusField, .coords {
    border: 1px solid #fff;
    border-top: 2px solid #777;
    border-left: 2px solid #777;
    background-color: #e3e9eb;
}

.coords {
    display: flex;
    justify-content: space-between;
    width: 118px;
    padding: 0 8px 0 14px;
}

.usbBadge {
    position: absolute;
    right: 2px;
    bottom: 9px;
    width: 50px;
    height: 50px;
    border-radius: 4px;
    background-color: rgba(70, 70, 70, 0.6);
}
```
